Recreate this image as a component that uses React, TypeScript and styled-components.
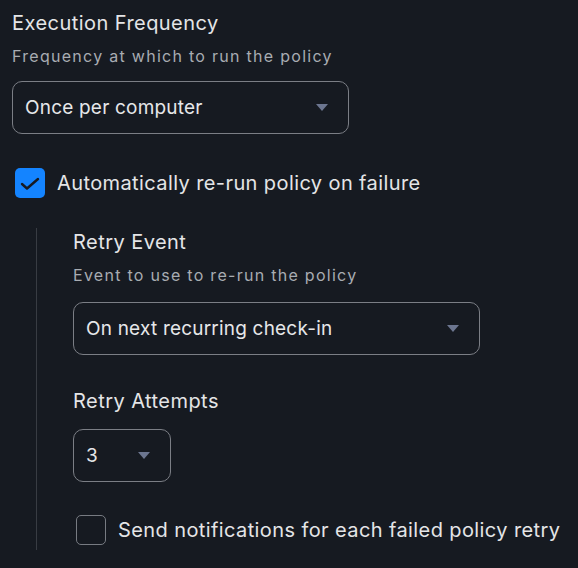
import { ReactNode } from 'react'
import styled, { createGlobalStyle } from 'styled-components'

const GlobalStyle = createGlobalStyle`
  html, body {
    margin: 0;
    padding: 0;
    background: #161a21;
  }
  body {
    font-family: Inter, "Noto Sans", sans-serif;
    color: #e4e5e7;
  }
`

const Page = styled.div`
  width: 578px;
  height: 568px;
  box-sizing: border-box;
  padding: 11px 12px 0 12px;
  display: flex;
  flex-direction: column;
  overflow: hidden;
`

const Field = styled.div<{ $mb?: number }>`
  display: flex;
  flex-direction: column;
  margin-bottom: ${({ $mb }) => $mb ?? 0}px;
`

const Title = styled.div`
  font-size: 20px;
  line-height: 24px;
  letter-spacing: 0.45px;
  color: #e4e5e7;
`

const Hint = styled.div`
  font-size: 16px;
  line-height: 20px;
  color: #a8acb2;
  margin-top: 11px;
  letter-spacing: 1.28px;
`

const SelectBox = styled.div<{ $width: number; $mt?: number }>`
  width: ${({ $width }) => $width}px;
  height: 53px;
  box-sizing: border-box;
  margin-top: ${({ $mt }) => $mt ?? 15}px;
  border: 1px solid #7b7e85;
  border-radius: 10px;
  padding: 0 20px 0 12px;
  display: flex;
  align-items: center;
  justify-content: space-between;
  font-size: 19px;
  letter-spacing: 0.2px;
  color: #e6e7e9;
`

const Caret = styled.span`
  width: 0;
  height: 0;
  border-left: 6px solid transparent;
  border-right: 6px solid transparent;
  border-top: 7px solid #6c7690;
`

const CheckRow = styled.label<{ $mb?: number }>`
  display: flex;
  align-items: center;
  gap: 12px;
  padding: 3px;
  margin-bottom: ${({ $mb }) => $mb ?? 0}px;
  font-size: 20px;
  line-height: 30px;
  letter-spacing: 0.4px;
  color: #e4e5e7;
`

const Box = styled.span<{ $checked: boolean }>`
  width: 30px;
  height: 30px;
  box-sizing: border-box;
  border-radius: 5px;
  flex-shrink: 0;
  display: flex;
  align-items: center;
  justify-content: center;
  background: ${({ $checked }) => ($checked ? '#1484ff' : 'transparent')};
  border: ${({ $checked }) => ($checked ? 'none' : '1px solid #777b82')};
`

const Indent = styled.div`
  margin-left: 24px;
  border-left: 1px solid #383c43;
  padding: 2px 0 2px 36px;
  display: flex;
  flex-direction: column;
  width: fit-content;
`

function Select({ value, width, mt }: { value: string; width: number; mt?: number }) {
  return (
    <SelectBox $width={width} $mt={mt}>
      <span>{value}</span>
      <Caret />
    </SelectBox>
  )
}

function Checkbox({ checked, children, mb }: { checked: boolean; children: ReactNode; mb?: number }) {
  return (
    <CheckRow $mb={mb}>
      <Box $checked={checked}>
        {checked && (
          <svg width="30" height="30" viewBox="0 0 30 30">
            <polyline points="7,16 12,20.5 23,11" fill="none" stroke="#161a21" strokeWidth="2.4" strokeLinecap="round" strokeLinejoin="round" />
          </svg>
        )}
      </Box>
      <span>{children}</span>
    </CheckRow>
  )
}

export default function App() {
  return (
    <>
      <GlobalStyle />
      <Page>
        <Field $mb={31}>
          <Title>Execution Frequency</Title>
          <Hint>Frequency at which to run the policy</Hint>
          <Select value="Once per computer" width={337} />
        </Field>
        <Checkbox checked mb={27}>
          Automatically re-run policy on failure
        </Checkbox>
        <Indent>
          <Field $mb={34}>
            <Title>Retry Event</Title>
            <Hint>Event to use to re-run the policy</Hint>
            <Select value="On next recurring check-in" width={407} mt={17} />
          </Field>
          <Field $mb={30}>
            <Title>Retry Attempts</Title>
            <Select value="3" width={98} mt={16} />
          </Field>
          <Checkbox checked={false}>Send notifications for each failed policy retry</Checkbox>
        </Indent>
      </Page>
    </>
  )
}
